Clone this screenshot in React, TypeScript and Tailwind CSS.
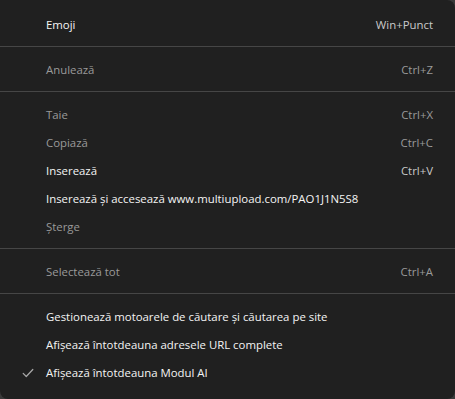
import React from 'react';

type Item = { label: string; shortcut?: string; disabled?: boolean; checked?: boolean };

const groups: Item[][] = [
  [{ label: 'Emoji', shortcut: 'Win+Punct' }],
  [{ label: 'Anulează', shortcut: 'Ctrl+Z', disabled: true }],
  [
    { label: 'Taie', shortcut: 'Ctrl+X', disabled: true },
    { label: 'Copiază', shortcut: 'Ctrl+C', disabled: true },
    { label: 'Inserează', shortcut: 'Ctrl+V' },
    { label: 'Inserează și accesează www.multiupload.com/PAO1J1N5S8' },
    { label: 'Șterge', disabled: true },
  ],
  [{ label: 'Selectează tot', shortcut: 'Ctrl+A', disabled: true }],
  [
    { label: 'Gestionează motoarele de căutare și căutarea pe site' },
    { label: 'Afișează întotdeauna adresele URL complete' },
    { label: 'Afișează întotdeauna Modul AI', checked: true },
  ],
];

const MenuRow: React.FC<{ item: Item }> = ({ item }) => (
  <div className="flex h-[28px] items-center">
    <div className="flex w-[46px] items-center justify-center pl-[10px]">
      {item.checked && (
        <svg width="14" height="14" viewBox="0 0 16 16" fill="none">
          <path d="M2.5 8.5 L6 12 L13.5 4" stroke="#a8a8a8" strokeWidth="1.4" strokeLinecap="round" strokeLinejoin="round" />
        </svg>
      )}
    </div>
    <span className={item.disabled ? 'text-[#9a9a9a]' : 'text-[#f4f4f4]'}>{item.label}</span>
    {item.shortcut && (
      <span className={`ml-auto pr-[22px] ${item.disabled ? 'text-[#9a9a9a]' : 'text-[#c9c9c9]'}`}>
        {item.shortcut}
      </span>
    )}
  </div>
);

const App: React.FC = () => {
  return (
    <div className="h-[399px] w-[455px] bg-[#3a3a3a] font-['Segoe_UI','Open_Sans',sans-serif] text-[11.4px]">
      <div className="h-full w-full rounded-tr-[8px] rounded-b-[8px] bg-[#202020] pt-[11px]">
        {groups.map((group, gi) => (
          <div key={gi}>
            {gi > 0 && <div className="mt-[7px] mb-[9px] h-px bg-[#464646]" />}
            {group.map((item, i) => (
              <MenuRow key={i} item={item} />
            ))}
          </div>
        ))}
      </div>
    </div>
  );
};

export default App;
